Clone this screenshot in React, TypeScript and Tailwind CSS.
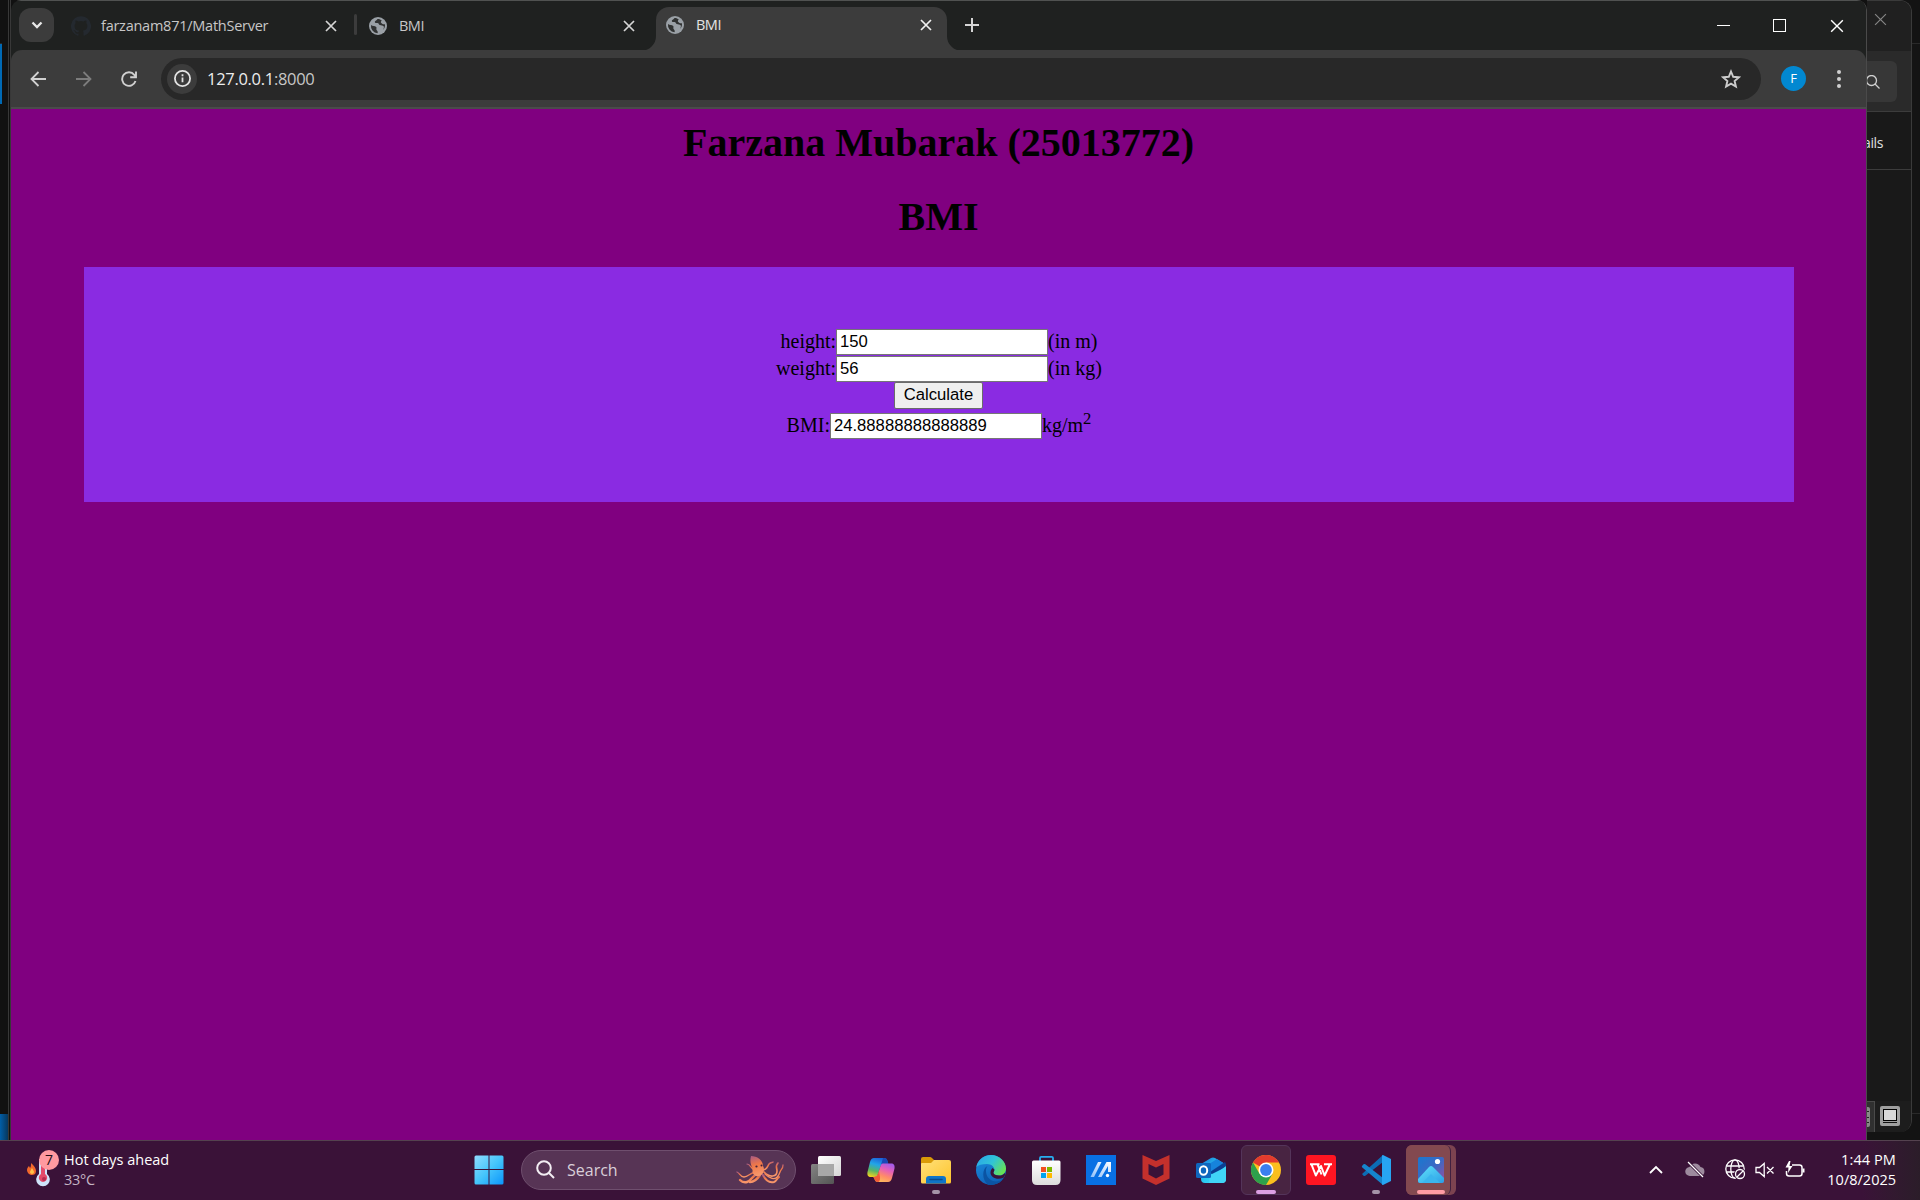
import React from "react";

const ui = "font-['Open_Sans','Noto_Sans',sans-serif]";

function Cross({ size, stroke, width = 2 }: { size: number; stroke: string; width?: number }) {
  return (
    <svg width={size} height={size} viewBox="0 0 12 12" fill="none" stroke={stroke} strokeWidth={width} className="shrink-0">
      <path d="M1 1 11 11M11 1 1 11" />
    </svg>
  );
}

function GlobeFavicon() {
  return (
    <svg width="18" height="18" viewBox="0 0 18 18" className="mr-3 shrink-0">
      <circle cx="9" cy="9" r="9" fill="#9aa0a6" />
      <path d="M2 8c1.500 1.400 4 .6 5.200 1.900 1 1.200-.6 2 .6 3.300.9.900 1.300 1.800.7 3A7.200 7.200 0 0 1 2 8ZM8.500 2c-.4 1.500-2.400 1.300-2.700 2.700-.2 1.300 1.500 1.300 2.600 1.300 1.500 0 1.200 1.400 2.300 2 1.500.7 3 .1 3.900 1.300.6.900.2 2.400-.6 3.700 1.600-1.600 2.300-3.700 1.900-5.800-1.700.4-2.600-.4-3.600-1.200-1-.9-.2-1.700.5-2.400C11.700 2.500 10.200 1.900 8.500 2Z" fill="#303232" />
    </svg>
  );
}

function Tab({ title, icon, bright }: { title: string; icon: React.ReactNode; bright?: boolean }) {
  return (
    <div className="flex h-full w-[266px] items-center">
      {icon}
      <span className={`flex-1 whitespace-nowrap text-[14.5px] ${title.length > 5 ? "tracking-[-0.25px]" : "tracking-[-0.5px]"} ${bright ? "text-[#e3e3e3]" : "text-[#c7c7c7]"}`}>{title}</span>
      <Cross size={12} stroke={bright ? "#f0f0f0" : "#d5d5d5"} width={1.7} />
    </div>
  );
}

function TitleBar() {
  return (
    <div className="flex h-[50px] items-start bg-[#1f2120]">
      <div className="ml-2 mt-[7px] flex h-[34px] w-[35px] items-center justify-center rounded-[12px] bg-[#3c3c3c]">
        <svg width="12" height="8" viewBox="0 0 12 8" fill="none" stroke="#e8e8e8" strokeWidth="2.300"><path d="M1.500 1.500 6 6l4.500-4.500" /></svg>
      </div>
      <div className="ml-[17px] h-[49px]">
        <Tab
          title="farzanam871/MathServer"
          icon={
            <svg width="20" height="20" viewBox="0 0 24 24" className="mr-[10px] shrink-0" fill="#24292f">
              <path d="M12 .3a12 12 0 0 0-3.800 23.400c.6.100.8-.3.800-.6v-2c-3.300.7-4-1.600-4-1.600-.6-1.400-1.400-1.800-1.400-1.800-1-.7.100-.7.100-.7 1.200 0 1.900 1.200 1.900 1.200 1 1.800 2.800 1.300 3.500 1 0-.8.400-1.300.7-1.600-2.700-.3-5.500-1.300-5.500-6 0-1.200.5-2.300 1.300-3.100-.2-.4-.6-1.600 0-3.200 0 0 1-.3 3.400 1.200a11.500 11.500 0 0 1 6 0c2.300-1.500 3.300-1.200 3.300-1.200.6 1.600.2 2.800 0 3.200.9.800 1.300 1.900 1.300 3.200 0 4.600-2.800 5.600-5.500 5.900.5.400.9 1 .9 2.200v3.300c0 .3.100.7.800.6A12 12 0 0 0 12 .3" />
            </svg>
          }
        />
      </div>
      <div className="ml-[17px] mt-[13px] h-[21px] w-[3px] rounded-full bg-[#3c3c3c]" />
      <div className="ml-3 h-[49px]"><Tab title="BMI" icon={<GlobeFavicon />} /></div>
      <svg width="15" height="15" viewBox="0 0 15 15" className="ml-[6px] self-end" fill="#3c3c3c"><path d="M15 0v15H0A15 15 0 0 0 15 0Z" /></svg>
      <div className="-mb-px mt-[6px] flex h-[44px] w-[291px] items-center rounded-t-[13px] bg-[#3c3c3c] pb-[8px] pl-[10px]">
        <Tab title="BMI" icon={<GlobeFavicon />} bright />
      </div>
      <svg width="15" height="15" viewBox="0 0 15 15" className="self-end" fill="#3c3c3c"><path d="M0 0v15h15A15 15 0 0 1 0 0Z" /></svg>
      <svg width="14" height="14" viewBox="0 0 14 14" className="ml-[3px] mt-[17px]" stroke="#d5d5d5" strokeWidth="2"><path d="M7 0v14M0 7h14" /></svg>
      <div className="ml-auto mr-[22px] flex h-[49px] items-center">
        <span className="mr-[43px] h-px w-[13px] bg-white" />
        <span className="mr-[44px] h-[13px] w-[13px] border border-white" />
        <Cross size={14} stroke="#ffffff" width={1.2} />
      </div>
    </div>
  );
}

function Toolbar() {
  return (
    <div className="h-[59px] bg-[#1f2120]">
      <div className="flex h-[59px] items-center rounded-t-[11px] border-b-2 border-[#4b4b4b] bg-[#3c3c3c]">
        <svg width="16" height="16" viewBox="0 0 16 16" className="ml-[19px] shrink-0" fill="none" stroke="#d0d0d0" strokeWidth="1.800"><path d="M16 8H1.500M8.500 1 1.500 8l7 7" /></svg>
        <svg width="16" height="16" viewBox="0 0 16 16" className="ml-[30px] shrink-0" fill="none" stroke="#7c7c7c" strokeWidth="1.800"><path d="M0 8h14.500M7.500 1l7 7-7 7" /></svg>
        <svg width="16" height="16" viewBox="0 0 16 16" className="ml-[29px] shrink-0" fill="none" stroke="#d0d0d0" strokeWidth="1.900"><path d="M14.500 10A6.800 6.800 0 1 1 13.300 3.800L14.800 5.400M15 .5v5.800H9.200" /></svg>
        <div className="ml-6 flex h-[42px] w-[1600px] items-center rounded-full bg-[#282828] pl-[6px] pr-5">
          <div className="flex h-[30px] w-[30px] items-center justify-center rounded-full bg-[#3c3c3c]">
            <svg width="17" height="17" viewBox="0 0 17 17" fill="none" stroke="#e3e3e3" strokeWidth="1.800"><circle cx="8.500" cy="8.500" r="7.600" /><path d="M8.500 7.500v4.700M8.500 4.300v1.900" /></svg>
          </div>
          <span className="ml-[10px] flex-1 pt-[2px] text-[16.5px] tracking-[-0.3px] text-[#ededed]">127.0.0.1<span className="text-[#c7c7c7]">:8000</span></span>
          <svg width="20" height="20" viewBox="0 0 20 20" fill="none" stroke="#cccccc" strokeWidth="1.900"><path d="m10 2.500 2.200 5.300 5.700.5-4.300 3.700 1.300 5.600-4.900-3-4.900 3 1.300-5.600L2.100 8.300l5.700-.5Z" /></svg>
        </div>
        <div className="ml-5 flex h-[25px] w-[25px] items-center justify-center rounded-full bg-[#0288d1] text-[13px] leading-none text-white">F</div>
        <div className="ml-[31px] flex flex-col gap-[3px]">
          <span className="h-1 w-1 rounded-full bg-[#d0d0d0]" />
          <span className="h-1 w-1 rounded-full bg-[#d0d0d0]" />
          <span className="h-1 w-1 rounded-full bg-[#d0d0d0]" />
        </div>
      </div>
    </div>
  );
}

const field = "h-[26px] w-[212px] border border-[#767676] bg-white px-[3px] font-['Liberation_Sans',sans-serif] text-[16.67px] leading-none text-black outline-none";

function Page() {
  return (
    <div className="flex-1 bg-[#800080] pt-[11px] font-['Liberation_Serif',serif] text-black">
      <h1 className="text-center text-[40px] font-bold leading-[46px]">Farzana Mubarak (25013772)</h1>
      <h1 className="mt-[28px] text-center text-[40px] font-bold leading-[46px]">BMI</h1>
      <form className="ml-[73px] mt-[27px] flex h-[235px] w-[1710px] flex-col items-center bg-[#8a2be2] pt-[62px] text-[20px] leading-[24px]">
        <div className="flex h-[27px]"><span>height:</span><input className={field} defaultValue="150" /><span>(in m)</span></div>
        <div className="flex h-[26px]"><span>weight:</span><input className={field} defaultValue="56" /><span>(in kg)</span></div>
        <button type="button" className="mr-px h-[27px] w-[89px] rounded-[2px] border border-[#6b6b6b] bg-[#efefef] pb-[2px] font-['Liberation_Sans',sans-serif] text-[16.67px] leading-[22px]">Calculate</button>
        <div className="mt-[4px] flex h-[26px]"><span>BMI:</span><input className={field} defaultValue="24.88888888888889" /><span>kg/m<sup className="top-[-8px] text-[16.67px] leading-none">2</sup></span></div>
      </form>
    </div>
  );
}

function RightDesktop() {
  return (
    <div className="flex h-full w-[53px] bg-[#131313]">
      <div className="flex h-[1132px] w-[45px] flex-col overflow-hidden rounded-r-[12px] border-r border-t border-[#3a3a3a] bg-[#191919]">
        <div className="flex h-[50px] justify-center bg-[#202020] pr-[17px] pt-3"><Cross size={13} stroke="#858585" width={1.100} /></div>
        <div className="h-[61px] border-b border-[#3c3c3c] bg-[#2a2a2a] pt-[10px]">
          <div className="flex h-[41px] w-[30px] items-center rounded-r-[6px] bg-[#373737]">
            <svg width="14" height="14" viewBox="0 0 14 14" className="-ml-px" fill="none" stroke="#cfcfcf" strokeWidth="1.300"><circle cx="5.500" cy="5.500" r="5" /><path d="m9 9 4.500 4.500" /></svg>
          </div>
        </div>
        <div className="flex h-[58px] items-center overflow-hidden border-b border-[#3c3c3c] text-[14px] tracking-[-0.4px] text-[#e0e0e0]"><span className="-ml-[4px] pt-[3px]">ails</span></div>
        <div className="mt-auto flex h-[31px] items-center bg-[#1d1d1d]">
          <div className="flex h-[31px] w-[8px] items-center border-r border-t border-[#4a4a4a] bg-[#303030]">
            <div className="flex h-5 w-[3px] flex-col justify-evenly rounded-r-[2px] bg-[#888]"><i className="h-px w-0.5 bg-[#222]" /><i className="h-px w-0.5 bg-[#222]" /><i className="h-px w-0.5 bg-[#222]" /></div>
          </div>
          <svg width="20" height="20" viewBox="0 0 20 20" className="mb-[2px] ml-[5px]"><rect width="20" height="20" rx="2" fill="#a0a0a0" /><rect x="3.500" y="3.500" width="13" height="11" fill="#d8d8d8" stroke="#000" /><path d="M3 16.500h14" stroke="#111" /></svg>
        </div>
      </div>
      <div className="mt-[43px] h-[1071px] w-2 border-y border-[#292929] bg-[#141414]" />
    </div>
  );
}

function Cell({ children, dot, className = "" }: { children: React.ReactNode; dot?: boolean; className?: string }) {
  return (
    <div className={`relative flex h-[50px] w-[55px] items-center justify-center ${className}`}>
      {children}
      {dot && <span className="absolute bottom-[1px] left-1/2 h-1 w-2 -translate-x-1/2 rounded-full bg-[#a593a8]" />}
    </div>
  );
}

function Ic({ children }: { children: React.ReactNode }) {
  return <svg width="30" height="30" viewBox="0 0 30 30" className="shrink-0">{children}</svg>;
}

function Gradients() {
  const g = (id: string, stops: string[], d: [number, number, number, number] = [0, 0, 1, 1]) => (
    <linearGradient id={id} x1={d[0]} y1={d[1]} x2={d[2]} y2={d[3]}>
      {stops.map((c, i) => <stop key={i} offset={i / (stops.length - 1)} stopColor={c} />)}
    </linearGradient>
  );
  return (
    <svg width="0" height="0" className="absolute">
      <defs>
        {g("win", ["#90dcff", "#45c5fb", "#0b95fb"])}
        {g("tv1", ["#ffffff", "#d5d5d5"])}
        {g("tv2", ["#848484", "#545454"])}
        {g("cpA", ["#1c66dc", "#22a5e8", "#58b566", "#f4d31c"], [0.5, 0, 0.2, 1])}
        {g("cpB", ["#a55bea", "#e560b8", "#ff8c68", "#fcbd5c"], [0.7, 0, 0.3, 1])}
        {g("fold", ["#ffe07a", "#fdc42c"])}
        {g("edgeA", ["#2aa7e8", "#31c4d6", "#6ae34d"], [0, 0.2, 1, 0.7])}
        {g("edgeB", ["#1b8fe0", "#0f62b8"], [0, 0, 0.5, 1])}
        {g("bag", ["#ffffff", "#dcdcdc"], [0, 0, 0, 1])}
        {g("asus", ["#ffffff", "#8fc0fa"], [1, 0, 0, 1])}
        {g("olk", ["#1b73d8", "#28c8f0", "#52e0fb"])}
        {g("ph", ["#1878d0", "#3c68c4", "#9b4e9e"])}
        {g("mt", ["#62e4fb", "#2a9ee6"])}
        {g("oct", ["#a85a84", "#f07848", "#f7966a"], [0, 0, 0.2, 1])}
      </defs>
    </svg>
  );
}

function Octopus() {
  return (
    <svg width="50" height="30" viewBox="0 0 50 30" fill="none" strokeLinecap="round">
      <g stroke="url(#oct)" strokeWidth="2.400">
        <path d="M20 17C15 18 13 22 9 22 5 22 5 18 2 17" strokeWidth="1.300" />
        <path d="M22 19c-4 1-6 7-10 8-4 1-6-1-7-2" />
        <path d="M21 16c-5-1-5-7-9-7" strokeWidth="1.200" />
        <path d="M25 20c-2 3-5 7-10 7" />
        <path d="M28 20c3 6 7 8 11 7 3-1 3-4 5-5" strokeWidth="2" />
        <path d="M29 17c6 6 13 5 13-1 0-3-2-5 1-8" strokeWidth="1.700" />
        <path d="M27 15c5 0 5-3 7-6 2-2 3-1 4-2" strokeWidth="1.500" />
        <path d="M30 19c7 6 12 7 15-2 1-3 3-3 3-7" strokeWidth="1.300" />
      </g>
      <path d="M16 1c6 0 12 4 12 10 2 3 1 9-4 10-4 1-8-3-6-7-3-5-3-9-2-13Z" fill="url(#oct)" />
      <circle cx="21.500" cy="11.500" r="1.100" fill="#43213a" /><circle cx="26.500" cy="10.500" r="1" fill="#43213a" />
    </svg>
  );
}

function Taskbar() {
  return (
    <div className="flex h-[60px] items-center border-t border-[#54424f] bg-[#3a1238] bg-linear-to-r from-[#3a1238] from-97% to-[#2b1d29] pb-[2px]">
      <Gradients />
      <div className="flex w-[461px] items-center pl-[27px]">
        <svg width="34" height="38" viewBox="0 0 34 38" className="mb-[4px] shrink-0">
          <path d="M4 14c3 3 5 5 5 8 0 3-2 4-4 4s-5-2-5-5c0-2 1-3 2-4l1 2c1-1 1-3 1-5Z" fill="#f2682c" />
          <path d="M5 19c1 2 2 3 2 4s-1 2-2 2-2-1-2-2 1-2 2-4Z" fill="#ffc24a" />
          <path d="M12 10h8v15a6.800 6.800 0 1 1-8 0Z" fill="#cfe3fa" />
          <path d="M14 12h4v13a4.200 4.200 0 1 1-4 0Z" fill="#e34a6a" />
          <circle cx="17" cy="30" r="2" fill="#b82a50" />
          <circle cx="22" cy="11" r="10" fill="#ff99a0" />
          <text x="22" y="16" textAnchor="middle" fontSize="14" fontFamily="Open Sans, sans-serif" fill="#241018">7</text>
        </svg>
        <div className="ml-[3px] flex flex-col text-[14.5px] leading-5">
          <span className="tracking-[0px] text-white">Hot days ahead</span>
          <span className="tracking-[-0.3px] text-[#c5b6c5]">33°C</span>
        </div>
      </div>
      <Cell>
        <Ic><g fill="url(#win)"><path d="M2 .5h12.500V14H.5V2Q.5.500 2 .5ZM15.500.500H28q1.500 0 1.500 1.500v12h-14ZM.500 15h14v14.500H2Q.5 29.500.5 28ZM15.500 15h14v13q0 1.500-1.500 1.500H15.500Z" /></g></Ic>
      </Cell>
      <div className="ml-[5px] mr-[2px] flex h-10 w-[275px] items-center rounded-full border border-[#6f4f6e] bg-[#573455] pl-[14px] pr-[10px]">
        <svg width="19" height="19" viewBox="0 0 19 19" fill="none" stroke="#f3eef3" strokeWidth="2"><circle cx="8" cy="8" r="6.800" /><path d="m13 13 5 5" /></svg>
        <span className="ml-[12px] flex-1 text-[16px] tracking-[0px] text-[#d9cfd9]">Search</span>
        <Octopus />
      </div>
      <Cell><Ic><rect x="0" y="9" width="23" height="20" rx="1.500" fill="url(#tv2)" /><rect x="7" y="1" width="23" height="20" rx="1.500" fill="url(#tv1)" /><path d="M7 9h16v12H8q-1 0-1-1Z" fill="#a8a8a8" /></Ic></Cell>
      <Cell><Ic>
        <path d="M8 3h10c2 0 3 1 3.500 3l.8 2.500H18c-2 0-3 1-3.500 3L12 19c-.7 2-1.500 3-3.500 3H5c-3 0-4-2-3.500-5L4 7c.7-2.500 2-4 4-4Z" fill="url(#cpA)" />
        <path d="M18 3c2 0 3 1 3.500 3l.8 2.500H18c-2 0-3 1-3.300 2.500L17 3Z" fill="#1a49b9" />
        <path d="M22 27H12c-2 0-3-1-3.500-3L8 22c2 0 3.300-1 4-3l2.500-8c.5-2 1.500-2.500 3.500-2.500h7c3 0 4 2 3.500 5L26 23c-.7 2.500-2 4-4 4Z" fill="url(#cpB)" />
        <path d="M7 22c3 0 4.500-1 5.300-3.500L13 16l1 6c.5 3-1 5-2 5-2 0-3-1-3.500-3Z" fill="#f05a38" />
      </Ic></Cell>
      <Cell dot><Ic>
        <path d="M0 4q0-2 2-2h7q1 0 2 1l2 2v8H0Z" fill="#d99a08" />
        <path d="M0 9q0-1 1-1h9l3-3h15q2 0 2 2v20q0 1.500-1.500 1.500h-27Q0 28.500 0 27Z" fill="url(#fold)" />
        <path d="M5 28.500V24q0-3 3-3h14q3 0 3 3v4.500Z" fill="#0f75c8" /><path d="M9 24.500h12" stroke="#0a4b8c" strokeWidth="1.500" strokeLinecap="round" />
      </Ic></Cell>
      <Cell><Ic>
        <circle cx="15" cy="15" r="15" fill="url(#edgeB)" />
        <path d="M.3 12C1.500 5 7.500 0 15 0c8.500 0 15 6.500 15 13.500 0 4.500-3.500 7-7 7-3 0-5.500-1-5.500-2.700 0-1 .9-1.300.9-3 0-3-3-5.800-7.400-5.800-5 0-9 1-10.700 3Z" fill="url(#edgeA)" />
        <path d="M11.500 11C9 14 9.500 20 13 23.500c3.500 3.500 9.500 4.500 14.500-.3A15 15 0 0 1 12 29.700C5.500 25 6 13.500 11.500 11Z" fill="#0b54a3" />
        <path d="M18.400 14.500c0 1.700-.9 2.300-.9 3.300 0 1.700 2.500 2.800 5.500 2.800 2.600 0 4.500-1 5.900-2.600l.4 1.500-1.500 3c-4 2-8.500 1.500-11-.5-3-2.400-3-6-.4-9Z" fill="#3a1238" />
      </Ic></Cell>
      <Cell><Ic>
        <path d="M9 7V3q0-1.200 1.200-1.200h10.600Q22 1.800 22 3v4" fill="none" stroke="#27aef0" strokeWidth="1.800" />
        <path d="M1 7q0-1.500 1.500-1.500h25.500Q29.500 5.500 29.500 7v18q0 5-5 5h-18.500Q1 30 1 25Z" fill="url(#bag)" />
        <path d="M10 12h5v5h-5Z" fill="#f25022" /><path d="M16 12h5v5h-5Z" fill="#7fba00" /><path d="M10 18h5v5h-5Z" fill="#00a4ef" /><path d="M16 18h5v5h-5Z" fill="#ffb900" />
      </Ic></Cell>
      <Cell><Ic><rect width="30" height="30" fill="#0870e4" /><path d="M4.500 22 12 7h3.500L8 22ZM12 22l8.500-15H25v10h-3v-6l-6.500 11Z" fill="url(#asus)" /><circle cx="21.500" cy="20.500" r="1.700" fill="#fff" /></Ic></Cell>
      <Cell><Ic><path d="m1.500 0 13.500 6 13.500-6v23.500L15 30 1.500 23.500Zm6 9v10.500l7.500 4 7.500-4V9L15 12.500Z" fill="#c4302c" fillRule="evenodd" /></Ic></Cell>
      <Cell><Ic>
        <path d="M5 9 15 3q2-1 4 0l9 5.500q2 1 2 3V24q0 4-4 4H9q-4 0-4-4Z" fill="url(#olk)" />
        <path d="m13 9 8-5 8 5-13 9Z" fill="#1683dc" /><path d="m14 17 15-10q1 1 1 4L17 21Z" fill="#0b3f92" /><path d="M14 20 30 12v12q0 4-4 4H13Z" fill="#40d5f7" />
        <rect x="0" y="8" width="15" height="15" rx="1.500" fill="#0f67be" /><ellipse cx="7.500" cy="15.500" rx="3.700" ry="4.300" fill="none" stroke="#fff" strokeWidth="2" />
      </Ic></Cell>
      <Cell>
        <div className="relative flex h-[50px] w-[50px] items-center justify-center rounded-[6px] border border-[#54345a] bg-[#482442]">
          <Ic>
            <circle cx="15" cy="15" r="15" fill="#fbbf1e" />
            <path d="M15 15 2 7.500A15 15 0 0 1 28 7.500H15Z" fill="#e33b2e" />
            <path d="M2 7.500A15 15 0 0 0 15 30l6.500-11.200H8.500Z" fill="#2da14c" />
            <circle cx="15" cy="15" r="7.500" fill="#fff" /><circle cx="15" cy="15" r="5.900" fill="#3b7ff0" />
          </Ic>
          <span className="absolute bottom-0 left-[14px] h-1 w-5 rounded-full bg-[#dc9fe4]" />
        </div>
      </Cell>
      <Cell><Ic><rect width="30" height="30" rx="3" fill="#ff1522" /><path d="M4 9.300h9.500M5.500 9.300 9.800 20.500 15 11l3.600 9.500 5.200-11M11.500 9.300 15.500 19.500M18 9.300h8" fill="none" stroke="#fff" strokeWidth="2" strokeLinejoin="round" /></Ic></Cell>
      <Cell dot><Ic>
        <path d="m1 19 1.500 1.700q.8.800 1.800 0L22 7V0L1 19Z" fill="#0c6cb4" />
        <path d="M1 11 2.500 9.300q.8-.8 1.800 0L22 23v7L1.300 12.500q-.8-.7-.3-1.500Z" fill="#1585cc" />
        <path d="M22 0 30 4v22l-8 4q-1 0-1-1V1q0-1 1-1Z" fill="#27a5f2" />
      </Ic></Cell>
      <Cell>
        <div className="ml-px flex h-[50px] w-[50px] items-center rounded-[6px] bg-[#7c4350]">
          <div className="relative flex h-[50px] w-[45px] items-center justify-center rounded-[6px] border-r border-[#402040] bg-[#834950] pl-[5px]">
            <Ic>
              <rect x="2" y="2" width="26" height="26" rx="2" fill="url(#ph)" />
              <path d="M2 24 13 12q2-2 4 0l11 11v3q0 2-2 2H4q-2 0-2-2Z" fill="url(#mt)" /><path d="m6 28 9-9 9 9Z" fill="#3ab5ee" /><circle cx="21.500" cy="6.500" r="2.600" fill="#fff" />
            </Ic>
            <span className="absolute bottom-[1px] left-[11px] h-1 w-7 rounded-full bg-[#ff9ba4]" />
          </div>
        </div>
      </Cell>
      <div className="ml-auto flex items-center pr-6">
        <svg width="14" height="9" viewBox="0 0 14 9" fill="none" stroke="#fff" strokeWidth="1.800"><path d="m1 8 6-6 6 6" /></svg>
        <svg width="21" height="18" viewBox="0 0 21 18" className="ml-[22px]"><path d="M5 15a4.500 4.500 0 0 1-.5-9A6 6 0 0 1 15.500 6 4.600 4.600 0 0 1 16 15Z" fill="#9d8a9e" /><path d="m3 1 15 15" stroke="#3a1238" strokeWidth="3" /><path d="m3 1 15 15" stroke="#fff" strokeWidth="1.200" /></svg>
        <svg width="21" height="21" viewBox="0 0 21 21" className="ml-[19px]" fill="none" stroke="#fff" strokeWidth="1.300"><circle cx="10" cy="10" r="9.200" /><ellipse cx="10" cy="10" rx="4.200" ry="9.200" /><path d="M1.500 7h17M1.500 13h10" /><circle cx="15" cy="15" r="6" fill="#3a1238" stroke="none" /><circle cx="15" cy="15" r="4.500" /><path d="m12 18 6-6" /></svg>
        <svg width="20" height="16" viewBox="0 0 20 16" className="ml-[9px]" fill="none" stroke="#fff" strokeWidth="1.300"><path d="M1 5.500h3.500L9.200 1.500v13L4.500 10.500H1ZM12 5l6.500 6.500M18.500 5 12 11.500" /></svg>
        <svg width="21" height="18" viewBox="0 0 21 18" className="ml-[10px]" fill="none" stroke="#fff" strokeWidth="1.500"><path d="M7 4h7.500Q17 4 17 6.500v6q0 2.500-2.500 2.500H4Q1.500 15 1.500 12.500V10" /><path d="M18.500 7.500v4" strokeWidth="2" /><path d="M4 0 .5 6.500h3L3 12l4.500-7H4.500l1-5Z" fill="#fff" stroke="none" /></svg>
        <div className="flex w-[90px] flex-col items-end whitespace-nowrap text-[14.5px] leading-5 text-white">
          <span className="tracking-[0.1px]">1:44 PM</span>
          <span className="tracking-[0px]">10/8/2025</span>
        </div>
      </div>
    </div>
  );
}

export default function App() {
  return (
    <div className={`flex h-[1200px] w-[1920px] flex-col overflow-hidden bg-[#111111] ${ui}`}>
      <div className="flex h-[1140px]">
        <div className="flex w-[11px] shrink-0 justify-between">
          <div className="flex w-[8px] flex-col justify-between">
            <div className="mt-[43px] h-[61px] w-0.5 border-t border-[#2a2a2a] bg-[#0069b4]" />
            <div className="h-[26px] w-[9px] bg-linear-to-r from-[#005ea8] to-[#063355]" />
          </div>
          <div className="w-[3px] border-x border-[#383838] bg-[#101010]" />
        </div>
        <div className="flex w-[1856px] shrink-0 flex-col overflow-hidden rounded-t-[10px] border-r border-[#4a4a4a]">
          <div className="h-px bg-[#505251]" />
          <div className="-mb-px"><TitleBar /></div>
          <Toolbar />
          <Page />
        </div>
        <RightDesktop />
      </div>
      <Taskbar />
    </div>
  );
}
